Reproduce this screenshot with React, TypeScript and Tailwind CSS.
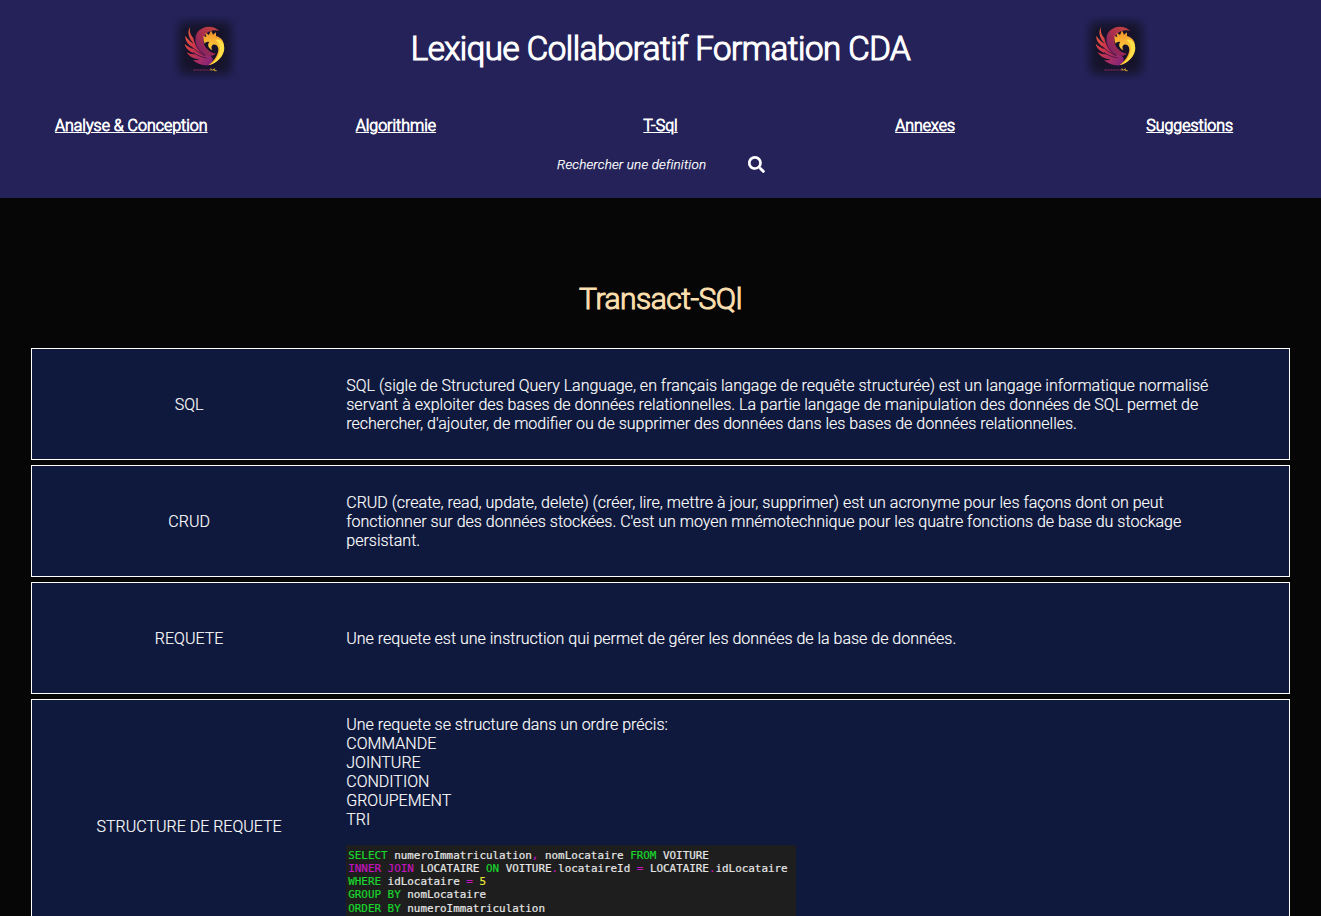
import React from "react";
import { FaSearch } from "react-icons/fa";

const links = ["Analyse & Conception", "Algorithmie", "T-Sql", "Annexes", "Suggestions"];

const entries = [
  {
    term: "SQL",
    lines: [
      "SQL (sigle de Structured Query Language, en français langage de requête structurée) est un langage informatique normalisé",
      "servant à exploiter des bases de données relationnelles. La partie langage de manipulation des données de SQL permet de",
      "rechercher, d'ajouter, de modifier ou de supprimer des données dans les bases de données relationnelles.",
    ],
  },
  {
    term: "CRUD",
    lines: [
      "CRUD (create, read, update, delete) (créer, lire, mettre à jour, supprimer) est un acronyme pour les façons dont on peut",
      "fonctionner sur des données stockées. C'est un moyen mnémotechnique pour les quatre fonctions de base du stockage",
      "persistant.",
    ],
  },
  {
    term: "REQUETE",
    lines: ["Une requete est une instruction qui permet de gérer les données de la base de données."],
  },
];

const order = [
  "Une requete se structure dans un ordre précis:",
  "COMMANDE",
  "JOINTURE",
  "CONDITION",
  "GROUPEMENT",
  "TRI",
];

function Phoenix() {
  return (
    <svg viewBox="0 0 64 64" className="size-16">
      <defs>
        <filter id="soft" x="-30%" y="-30%" width="160%" height="160%" colorInterpolationFilters="sRGB">
          <feGaussianBlur stdDeviation="5" />
        </filter>
        <linearGradient id="wing" x1="0" y1="0" x2="1" y2="1">
          <stop offset="0" stopColor="#ef6a3c" />
          <stop offset="0.4" stopColor="#d03848" />
          <stop offset="1" stopColor="#7a2280" />
        </linearGradient>
        <linearGradient id="crest" x1="1" y1="0" x2="0" y2="1">
          <stop offset="0" stopColor="#c84840" />
          <stop offset="0.5" stopColor="#a92e4c" />
          <stop offset="1" stopColor="#701f70" />
        </linearGradient>
        <linearGradient id="neck" x1="0" y1="0" x2="0" y2="1">
          <stop offset="0" stopColor="#f08c2c" />
          <stop offset="0.45" stopColor="#ffc636" />
          <stop offset="1" stopColor="#ef8a2a" />
        </linearGradient>
      </defs>
      <rect x="6" y="6" width="52" height="52" rx="6" fill="#16132a" filter="url(#soft)" />
      <g transform="translate(6 4) scale(0.3333)">
        <path
          d="M34 20C30 33 34 44 43 54C45 70 53 83 67 94C80 104 98 104 101 116C102 126 97 132 89 136C73 138 55 132 41 120C48 121 55 121 61 118C45 117 30 110 23 97C32 102 42 104 51 102C35 97 20 87 17 71C26 80 36 85 46 87C30 76 17 62 19 47C26 58 34 65 44 71C29 54 23 36 34 20Z"
          fill="url(#wing)"
        />
        <path
          d="M121 33C103 14 70 16 55 37C41 62 50 92 80 105C92 110 105 107 110 101C89 97 73 80 73 60C74 41 96 25 121 33Z"
          fill="url(#crest)"
        />
        <path d="M51 43C43 68 54 92 79 106M36 78C48 91 60 98 78 107M42 97C54 106 67 111 83 114" fill="none" stroke="#451542" strokeWidth="2.5" />
        <path
          d="M74 62L73 48L82 51L79 38L90 45L96 31L102 44L111 37L111 48C130 53 139 69 134 91C128 114 111 129 89 136C104 123 119 104 118 87C117 76 109 72 102 74C96 77 96 84 100 90C88 86 84 74 91 66C85 64 80 66 77 71Z"
          fill="url(#neck)"
        />
        <path
          d="M114 64C127 75 125 96 113 114C108 122 99 131 89 136C116 128 136 107 136 83C134 65 121 54 108 60Z"
          fill="#ffe049"
        />
        <path d="M43 150H93" stroke="#672549" strokeWidth="5" strokeDasharray="7 2" />
        <path d="M96 152V146L101 151L106 146V152H113" fill="none" stroke="#d6a43d" strokeWidth="3" />
      </g>
    </svg>
  );
}

const G = ({ children }: { children: React.ReactNode }) => <span className="text-[#18d62d]">{children}</span>;
const M = ({ children }: { children: React.ReactNode }) => <span className="text-[#c414bd]">{children}</span>;

function Query() {
  return (
    <pre className="mt-4 h-[77px] w-[450px] bg-[#1e1e1e] pt-1 pl-0.5 font-['DejaVu_Sans_Mono',monospace] text-[10.9px] leading-[13.15px] text-[#e6e6e6] [-webkit-text-stroke:0.2px]">
      <G>SELECT</G> numeroImmatriculation<M>,</M> nomLocataire <G>FROM</G> VOITURE{"\n"}
      <M>INNER JOIN</M> LOCATAIRE <G>ON</G> VOITURE<M>.</M>locataireId <M>=</M> LOCATAIRE<M>.</M>idLocataire{"\n"}
      <G>WHERE</G> idLocataire <M>=</M> <span className="text-[#e4e63a]">5</span>{"\n"}
      <G>GROUP BY</G> nomLocataire{"\n"}
      <G>ORDER BY</G> numeroImmatriculation
    </pre>
  );
}

function Row({ term, className, children }: { term: string; className: string; children: React.ReactNode }) {
  return (
    <section className={`flex shrink-0 items-center border border-white bg-[#0f193d] ${className}`}>
      <div className="w-1/4 text-center">{term}</div>
      <div className="w-3/4 whitespace-nowrap">{children}</div>
    </section>
  );
}

export default function App() {
  return (
    <div className="h-screen overflow-hidden bg-[#060606] font-['Roboto',sans-serif] text-base leading-[19px] font-light text-white [-webkit-text-stroke:0.15px]">
      <header className="h-[198px] bg-[#242259]">
        <div className="flex h-24 items-center justify-evenly">
          <Phoenix />
          <h1 className="pt-px text-[33px] leading-10 tracking-[-0.45px] [-webkit-text-stroke:1.2px_white]">
            Lexique Collaboratif Formation CDA
          </h1>
          <Phoenix />
        </div>
        <nav className="-mx-px mt-5 grid grid-cols-5 text-center">
          {links.map((label) => (
            <a key={label} href="#" className="justify-self-center underline [-webkit-text-stroke:0.8px_white]">
              {label}
            </a>
          ))}
        </nav>
        <div className="mt-[19px] flex h-5 items-center pl-[557px]">
          <span className="w-[191px] text-[13.33px] tracking-[0.2px] italic [-webkit-text-stroke:0.25px]">
            Rechercher une definition
          </span>
          <FaSearch className="size-[17px]" />
        </div>
      </header>
      <main className="flex flex-col px-[31px] pt-[81px]">
        <h2 className="mb-[29px] text-center text-[30px] leading-10 tracking-[-0.5px] text-[#fbdfae] [-webkit-text-stroke:1.1px_#fbdfae]">
          Transact-SQl
        </h2>
        <div className="flex flex-col gap-[5px]">
          {entries.map((entry) => (
            <Row key={entry.term} term={entry.term} className="h-28">
              {entry.lines.map((line) => (
                <p key={line}>{line}</p>
              ))}
            </Row>
          ))}
          <Row term="STRUCTURE DE REQUETE" className="h-[254px]">
            <div className="h-[222px]">
              {order.map((line) => (
                <p key={line}>{line}</p>
              ))}
              <Query />
            </div>
          </Row>
        </div>
      </main>
    </div>
  );
}
